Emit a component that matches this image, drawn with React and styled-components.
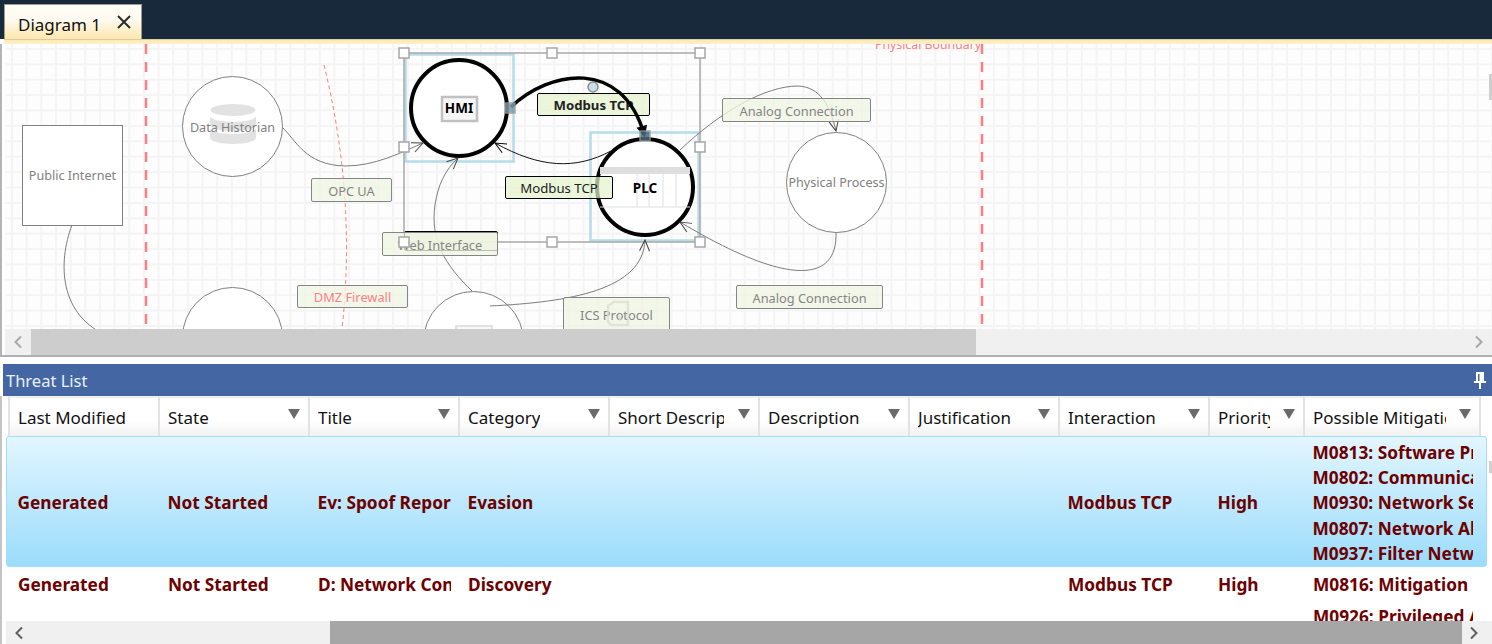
import React from "react";
import styled, { createGlobalStyle } from "styled-components";

const Global = createGlobalStyle`
  html, body { margin: 0; padding: 0; background: #fff; overflow: hidden; }
  body { font-family: "Noto Sans", "Open Sans", sans-serif; }
`;

const COLUMNS = "150px 150px 150px 150px 150px 150px 150px 150px 95px 178px";

const Page = styled.div`
  width: 1492px;
  height: 644px;
  display: flex;
  flex-direction: column;
  overflow: hidden;
  background: #fff;
`;
const TabBar = styled.div`
  height: 39px;
  flex: none;
  background: #17293b;
  display: flex;
  align-items: flex-end;
  padding-left: 4px;
`;
const Tab = styled.div`
  width: 138px;
  height: 35px;
  box-sizing: border-box;
  border: 1px solid #9c9c94;
  border-bottom: none;
  background: linear-gradient(#fffdf6, #fffaf0 45%, #fee7ab);
  display: flex;
  align-items: center;
  justify-content: space-between;
  padding: 4px 9px 0 13px;
  font-size: 17px;
  color: #111;
`;
const CloseIcon = styled.svg`
  margin-bottom: 4px;
`;
const CreamStrip = styled.div`
  height: 5px;
  box-sizing: border-box;
  flex: none;
  border-top: 1px solid #d9cda6;
  background: linear-gradient(#fde9b4, #fff0c8);
  margin-left: 4px;
`;
const DiagramArea = styled.div`
  flex: none;
  height: 311px;
  display: flex;
  flex-direction: column;
  border-left: 2px solid #b4b4b4;
  padding-left: 3px;
`;
const Canvas = styled.div`
  position: relative;
  height: 285px;
  overflow: hidden;
  background-color: #fdfdfd;
  background-image:
    linear-gradient(90deg, #f4f4f4 2px, transparent 2px),
    linear-gradient(#f4f4f4 2px, transparent 2px);
  background-size: 14.67px 15.4px;
  background-position: 6px 4px;
`;
const Overlay = styled.svg`
  position: absolute;
  left: 0;
  top: 0;
  width: 1487px;
  height: 285px;
  pointer-events: none;
`;
const Node = styled.div`
  position: absolute;
  left: ${(p) => p.$x - 5}px;
  top: ${(p) => p.$y - 44}px;
  width: ${(p) => (p.$selected ? 100 : 101)}px;
  height: ${(p) => (p.$selected ? 100 : 101)}px;
  box-sizing: border-box;
  border: ${(p) => (p.$selected ? "4px solid #000" : "1px solid #808080")};
  border-radius: ${(p) => (p.$square ? "0" : "50%")};
  background: #fff;
  display: flex;
  align-items: center;
  justify-content: center;
  font-size: ${(p) => (p.$selected ? 13.5 : 12.6)}px;
  color: ${(p) => (p.$selected ? "#000" : "#808080")};
  font-weight: ${(p) => (p.$selected ? 700 : 400)};
`;
const NodeText = styled.span`
  position: relative;
  z-index: 1;
  top: ${(p) => p.$dy || 0}px;
`;
const NodeIcon = styled.svg`
  position: absolute;
  left: 0;
  top: 0;
  overflow: visible;
`;
const Label = styled.div`
  position: absolute;
  left: ${(p) => p.$x - 5}px;
  top: ${(p) => p.$y - 44}px;
  width: ${(p) => p.$w}px;
  height: ${(p) => p.$h || 24}px;
  box-sizing: border-box;
  border: 1px solid ${(p) => (p.$active ? "#000" : "#858585")};
  border-radius: 2px;
  background: ${(p) => (p.$active ? "rgba(228,242,205,.72)" : "rgba(240,245,228,.78)")};
  display: flex;
  align-items: ${(p) => (p.$top ? "flex-start" : "center")};
  justify-content: center;
  padding-top: ${(p) => (p.$top ? "8px" : "1px")};
  font-size: ${(p) => (p.$active ? 13.2 : 12.8)}px;
  white-space: nowrap;
  color: ${(p) => (p.$red ? "#fb7f86" : p.$active ? "#222" : "#858585")};
  font-weight: ${(p) => (p.$bold ? 700 : 400)};
`;
const BoundaryText = styled.div`
  position: absolute;
  right: 511px;
  top: -8px;
  font-size: 12.3px;
  color: #fb7f86;
  white-space: nowrap;
`;
const ScrollBar = styled.div`
  flex: none;
  height: ${(p) => p.$h}px;
  display: flex;
  align-items: stretch;
  background: #f0f0f0;
`;
const ScrollButton = styled.div`
  flex: none;
  width: ${(p) => p.$w}px;
  display: flex;
  align-items: center;
  justify-content: center;
  color: ${(p) => p.$color};
`;
const ScrollThumb = styled.div`
  flex: none;
  width: ${(p) => p.$w}px;
  background: ${(p) => p.$color};
`;
const ScrollFill = styled.div`
  flex: 1;
`;
const SideThumb = styled.div`
  position: absolute;
  right: 0;
  top: ${(p) => p.$y}px;
  width: 3px;
  height: ${(p) => p.$h}px;
  background: #cfcfcf;
`;
const Divider = styled.div`
  flex: none;
  height: 2px;
  background: #b0b0b0;
`;
const Gap = styled.div`
  flex: none;
  height: 7px;
`;
const PanelTitle = styled.div`
  flex: none;
  height: 32px;
  margin-left: 3px;
  background: #4467a3;
  color: #e8f0fa;
  display: flex;
  align-items: center;
  justify-content: space-between;
  padding: 0 6px 0 3px;
  font-size: 16.5px;
`;
const ListArea = styled.div`
  position: relative;
  flex: 1;
  min-height: 0;
  border-left: 2px solid #c4c4c4;
  padding-left: 4px;
  display: flex;
  flex-direction: column;
`;
const HeaderRow = styled.div`
  flex: none;
  height: 40px;
  box-sizing: border-box;
  padding-left: 2px;
  display: grid;
  grid-template-columns: ${COLUMNS};
`;
const HeaderCell = styled.div`
  position: relative;
  box-sizing: border-box;
  border-left: 2px solid #e2e2e2;
  border-top: 2px solid #f0f0f0;
  background: linear-gradient(#fff 60%, #f1f1f1);
  display: flex;
  align-items: center;
  padding-left: 8px;
  font-size: 17px;
  color: #111;
  &:last-child { border-right: 2px solid #e2e2e2; }
`;
const HeaderText = styled.span`
  display: block;
  white-space: nowrap;
  overflow: hidden;
  max-width: ${(p) => p.$clip}px;
`;
const SortArrow = styled.i`
  position: absolute;
  right: 8px;
  top: 11px;
  width: 0;
  height: 0;
  border-left: 6.5px solid transparent;
  border-right: 6.5px solid transparent;
  border-top: 10px solid #6a6a6a;
`;
const Rows = styled.div`
  flex: 1;
  min-height: 0;
  overflow: hidden;
`;
const Row = styled.div`
  height: ${(p) => p.$h}px;
  box-sizing: border-box;
  display: grid;
  grid-template-columns: ${COLUMNS};
  padding-left: 3px;
  margin-right: 5px;
  ${(p) =>
    p.$selected
      ? `align-items: center;
         padding-top: 3px;
         border: 1.5px solid #9fdffb;
         border-radius: 3px;
         background: linear-gradient(#e3f6ff, #d8f2fe 14%, #9bdcfb);
         padding-left: 1.5px;`
      : `align-items: start;
         padding-top: 2px;
         background: #fff;`}
`;
const Cell = styled.div`
  box-sizing: border-box;
  margin-right: 8px;
  padding-left: 9px;
  overflow: hidden;
  white-space: nowrap;
  font-size: 17.3px;
  line-height: 32px;
  font-weight: 700;
  color: #6d0000;
`;
const MitigationCell = styled(Cell)`
  margin-right: 9px;
`;
const MitigationLine = styled.div`
  height: ${(p) => p.$h}px;
  line-height: ${(p) => p.$h}px;
`;

const Chevron = ({ dir }) => (
  <svg width="10" height="14" viewBox="0 0 10 14">
    <path
      d={dir === "left" ? "M8 1.5 L2.5 7 L8 12.5" : "M2 1.5 L7.5 7 L2 12.5"}
      fill="none"
      stroke="currentColor"
      strokeWidth="2"
    />
  </svg>
);

const headers = [
  ["Last Modified", 130, false],
  ["State", 120, true],
  ["Title", 120, true],
  ["Category", 120, true],
  ["Short Description", 106, true],
  ["Description", 120, true],
  ["Justification", 120, true],
  ["Interaction", 120, true],
  ["Priority", 52, true],
  ["Possible Mitigations", 133, true],
];

const threats = [
  {
    height: 131,
    selected: true,
    cells: ["Generated", "Not Started", "Ev: Spoof Reporting Message", "Evasion", "", "", "", "Modbus TCP", "High"],
    mitigations: [
      "M0813: Software Process",
      "M0802: Communication Auth",
      "M0930: Network Segmentation",
      "M0807: Network Allowlists",
      "M0937: Filter Network Traffic",
    ],
  },
  {
    height: 54,
    cells: ["Generated", "Not Started", "D: Network Connection", "Discovery", "", "", "", "Modbus TCP", "High"],
    mitigations: ["M0816: Mitigation Limited", "M0926: Privileged Account"],
  },
];

const handles = [
  [404, 53], [552, 53], [700, 53],
  [404, 147], [700, 147],
  [404, 242], [552, 242], [700, 242],
];

const grayEdges = [
  "M282 127 C296 140 305 165 345 166 C375 166 400 153 423 143",
  "M472 291 C445 265 430 240 435 205 C438 185 445 170 458 158",
  "M490 306 C570 302 643 290 645 240",
  "M680 150 C720 112 765 86 798 86 C820 87 830 105 836 131",
  "M836 232 C838 282 790 288 680 222",
];

function Diagram() {
  return (
    <Canvas>
      <Node $x={22} $y={125} $square>Public Internet</Node>
      <Node $x={182} $y={76}>
        <NodeIcon width="99" height="99">
          <g fill="#e2e2e2">
            <ellipse cx="50" cy="33" rx="22.5" ry="6" />
            <path d="M27 39 a23 6 0 0 0 46 0 v9 a23 6 0 0 1 -46 0 z" />
            <path d="M27 51 a23 6 0 0 0 46 0 v10 a23 6 0 0 1 -46 0 z" />
          </g>
        </NodeIcon>
        <NodeText $dy={1}>Data Historian</NodeText>
      </Node>
      <Node $x={182} $y={287} />
      <Node $x={786} $y={132}>Physical Process</Node>
      <Node $x={423} $y={291}>
        <NodeIcon width="99" height="99">
          <rect x="32" y="34" width="36" height="30" fill="#f8f8f8" stroke="#e2e2e2" strokeWidth="2" />
        </NodeIcon>
      </Node>
      <Node $x={409} $y={58} $selected>
        <NodeIcon width="92" height="92">
          <rect x="29" y="35" width="35" height="24" fill="#f7f7f7" stroke="#c0c0c0" strokeWidth="2.5" />
        </NodeIcon>
        <NodeText>HMI</NodeText>
      </Node>
      <Node $x={595} $y={137} $selected>
        <NodeIcon width="92" height="92">
          <rect x="1" y="26" width="90" height="7" fill="#dedede" />
          <path d="M38 33 V66 M50 33 V66 M64 33 V66 M77 33 V66 M1 66 H91" stroke="#dfdfdf" fill="none" />
        </NodeIcon>
        <NodeText $dy={1}>PLC</NodeText>
      </Node>

      <Overlay viewBox="5 44 1487 285">
        <defs>
          <marker id="open" markerWidth="14" markerHeight="12" refX="12" refY="6" orient="auto" markerUnits="userSpaceOnUse">
            <path d="M1 1 L12 6 L1 11" fill="none" stroke="#444" strokeWidth="1" />
          </marker>
          <marker id="openBlack" markerWidth="14" markerHeight="12" refX="12" refY="6" orient="auto" markerUnits="userSpaceOnUse">
            <path d="M1 1 L12 6 L1 11" fill="none" stroke="#000" strokeWidth="1" />
          </marker>
          <marker id="solid" markerWidth="14" markerHeight="14" refX="9" refY="7" orient="auto" markerUnits="userSpaceOnUse">
            <path d="M1 1.5 L12 7 L1 12.5 z" fill="#000" />
          </marker>
        </defs>
        <path d="M146 44 V329 M982 44 V329" stroke="#fb7f86" strokeWidth="2.5" strokeDasharray="10 8" fill="none" />
        <path d="M324 65 C345 150 352 240 342 329" stroke="#fb7f86" strokeWidth="1" strokeDasharray="4 3" fill="none" />
        <rect x="405.5" y="54.5" width="108" height="107" fill="none" stroke="#b5dce9" strokeWidth="2.5" />
        <rect x="590.5" y="132.5" width="108" height="108" fill="none" stroke="#b5dce9" strokeWidth="2.5" />
        <rect x="404" y="53" width="296" height="189" fill="none" stroke="#a8a8a8" strokeWidth="1.5" />
        <path d="M72 225 C58 262 58 316 110 337" fill="none" stroke="#7c7c7c" strokeWidth="1" />
        {grayEdges.map((d) => (
          <path key={d} d={d} fill="none" stroke="#7c7c7c" strokeWidth="1" markerEnd="url(#open)" />
        ))}
        <path d="M611 151 C575 170 540 168 495 143" fill="none" stroke="#111" strokeWidth="1" markerEnd="url(#openBlack)" />
        <circle cx="593" cy="87" r="5" fill="#c7dfe9" stroke="#8d8d8d" strokeWidth="1.5" />
      </Overlay>

      <BoundaryText>Physical Boundary</BoundaryText>
      <Label $x={311} $y={178} $w={81}>OPC UA</Label>
      <Label $x={537} $y={93} $w={113} $h={23} $active $bold>Modbus TCP</Label>
      <Label $x={505} $y={176} $w={108} $h={23} $active>Modbus TCP</Label>
      <Label $x={722} $y={98} $w={149}>Analog Connection</Label>
      <Label $x={404} $y={231} $w={94} $h={20} $active />
      <Label $x={382} $y={232} $w={116}>Web Interface</Label>
      <Label $x={297} $y={285} $w={111} $h={23} $red>DMZ Firewall</Label>
      <Label $x={563} $y={297} $w={107} $h={44} $top>ICS Protocol</Label>
      <Label $x={736} $y={285} $w={147}>Analog Connection</Label>

      <Overlay viewBox="5 44 1487 285">
        <path d="M511 107 C550 70 622 58 644 134" fill="none" stroke="#000" strokeWidth="3.5" markerEnd="url(#solid)" />
        <rect x="505" y="103" width="10" height="10" fill="#7e9bab" stroke="#9a9a9a" strokeWidth="1.5" opacity=".85" />
        <rect x="640" y="131" width="10" height="10" fill="#46687b" stroke="#9a9a9a" strokeWidth="1.5" opacity=".85" />
        <path d="M608 322 V306 L614 302 H628 V325 H611 Z M620 316 v5" fill="none" stroke="#dcdcd2" strokeWidth="2.5" opacity=".7" />
        {handles.map(([x, y]) => (
          <rect key={`${x}-${y}`} x={x - 5} y={y - 5} width="10" height="10" fill="#fff" stroke="#a6a6a6" strokeWidth="1.5" />
        ))}
      </Overlay>
      <SideThumb $y={30} $h={26} />
    </Canvas>
  );
}

export default function App() {
  return (
    <Page>
      <Global />
      <TabBar>
        <Tab>
          Diagram 1
          <CloseIcon width="16" height="16" viewBox="0 0 16 16">
            <path d="M2 2 L14 14 M14 2 L2 14" stroke="#2b2b2b" strokeWidth="2" fill="none" />
          </CloseIcon>
        </Tab>
      </TabBar>
      <CreamStrip />
      <DiagramArea>
        <Diagram />
        <ScrollBar $h={26}>
          <ScrollButton $w={26} $color="#a8a8a8"><Chevron dir="left" /></ScrollButton>
          <ScrollThumb $w={945} $color="#cdcdcd" />
          <ScrollFill />
          <ScrollButton $w={26} $color="#a8a8a8"><Chevron dir="right" /></ScrollButton>
        </ScrollBar>
      </DiagramArea>
      <Divider />
      <Gap />
      <PanelTitle>
        Threat List
        <svg width="12" height="18" viewBox="0 0 12 18">
          <path d="M2 1 H10 V10 H12 V12 H7 V18 H5 V12 H0 V10 H2 Z M4 3 V10 H5.5 V3 Z" fill="#fff" fillRule="evenodd" />
        </svg>
      </PanelTitle>
      <ListArea>
        <HeaderRow>
          {headers.map(([name, clip, sortable]) => (
            <HeaderCell key={name}>
              <HeaderText $clip={clip}>{name}</HeaderText>
              {sortable && <SortArrow />}
            </HeaderCell>
          ))}
        </HeaderRow>
        <Rows>
          {threats.map((t) => (
            <Row key={t.cells[2]} $h={t.height} $selected={t.selected}>
              {t.cells.map((c, i) => (
                <Cell key={i}>{c}</Cell>
              ))}
              <MitigationCell>
                {t.mitigations.map((m) => (
                  <MitigationLine key={m} $h={t.selected ? 25.2 : 32}>{m}</MitigationLine>
                ))}
              </MitigationCell>
            </Row>
          ))}
        </Rows>
        <ScrollBar $h={23}>
          <ScrollButton $w={26} $color="#606060"><Chevron dir="left" /></ScrollButton>
          <ScrollFill />
          <ScrollThumb $w={1132} $color="#a6a6a6" />
          <ScrollButton $w={24} $color="#606060"><Chevron dir="right" /></ScrollButton>
          <ScrollButton $w={6} $color="#fff" />
        </ScrollBar>
        <SideThumb $y={65} $h={12} />
      </ListArea>
    </Page>
  );
}
